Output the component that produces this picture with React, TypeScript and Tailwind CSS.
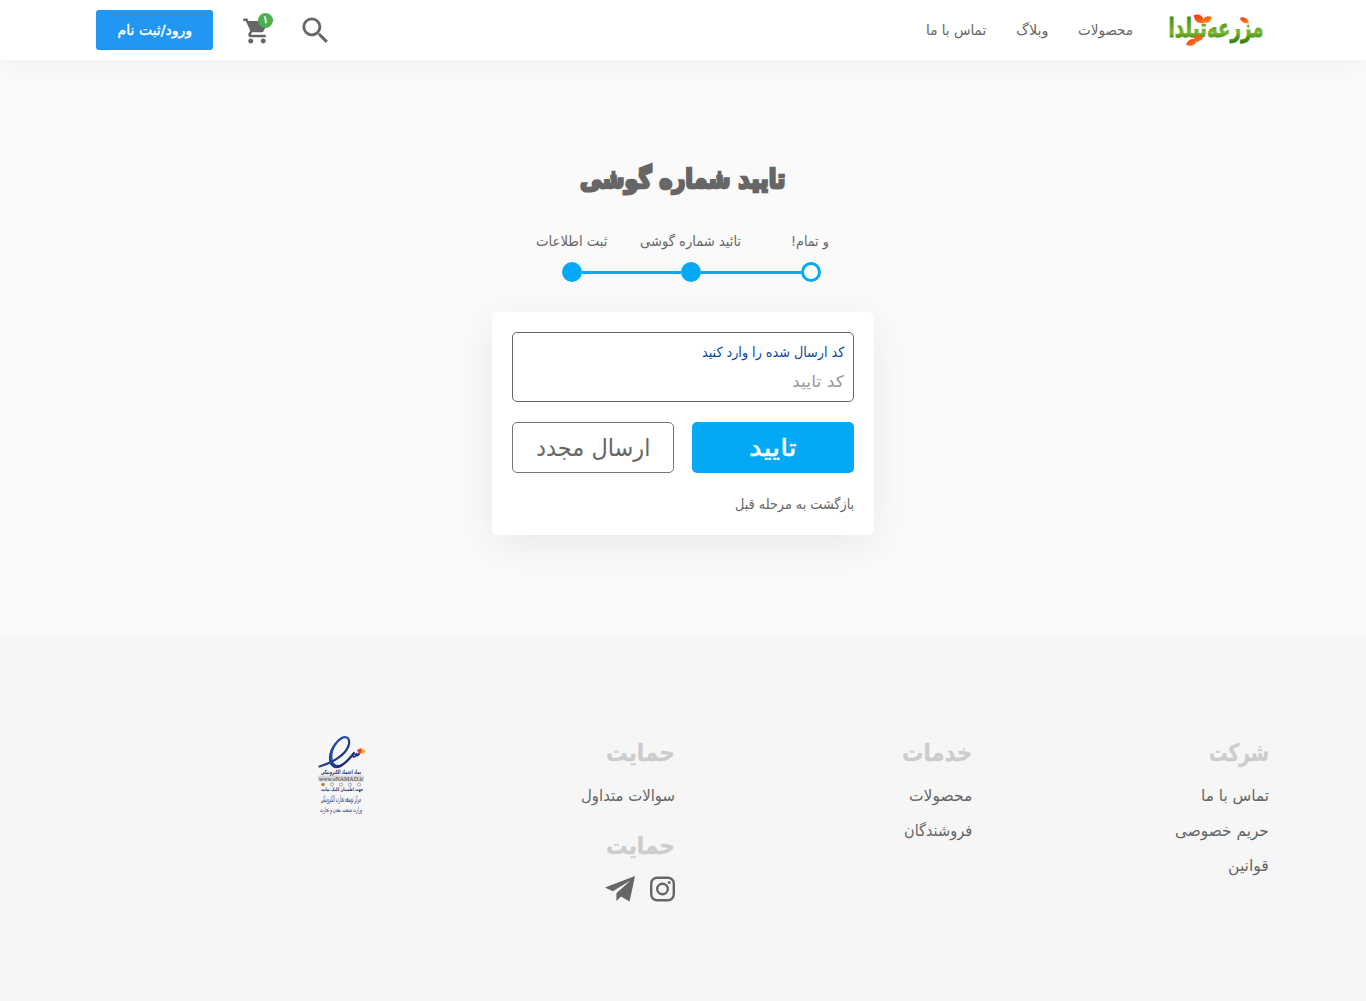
import { useLayoutEffect, useRef, type ReactNode } from "react";
import { MdSearch, MdShoppingCart } from "react-icons/md";

/** Single line of text condensed or widened to a given measure. */
function Fit({ w, className = "", children }: { w: number; className?: string; children: ReactNode }) {
  const inner = useRef<HTMLSpanElement>(null);
  useLayoutEffect(() => {
    const el = inner.current;
    if (el) el.style.transform = `scaleX(${w / el.offsetWidth})`;
  }, [w]);
  return (
    <span className={`flex justify-start whitespace-nowrap ${className}`} style={{ width: w }}>
      <span ref={inner} className="block shrink-0 origin-right">
        {children}
      </span>
    </span>
  );
}

function Logo() {
  return (
    <svg width="98" height="46" viewBox="0 -5 98 46" className="block overflow-visible">
      <defs>
        <linearGradient id="leaf" x1="0" y1="3" x2="0" y2="32" gradientUnits="userSpaceOnUse">
          <stop offset="0" stopColor="#3c8a12" />
          <stop offset="0.35" stopColor="#5da31f" />
          <stop offset="0.6" stopColor="#7ab82f" />
          <stop offset="0.8" stopColor="#478f14" />
          <stop offset="1" stopColor="#2f7d0c" />
        </linearGradient>
        <linearGradient id="petal" x1="0" y1="0" x2="1" y2="1">
          <stop offset="0" stopColor="#ff2a10" />
          <stop offset="1" stopColor="#ff9418" />
        </linearGradient>
      </defs>
      <text
        x="96.5"
        y="24.5"
        direction="rtl"
        textLength="95"
        lengthAdjust="spacingAndGlyphs"
        fontFamily="'DejaVu Sans', sans-serif"
        fontWeight="700"
        fontSize="26"
        fill="url(#leaf)"
        stroke="url(#leaf)"
        strokeWidth="0.8"
      >
        مزرعه‌تیلدا
      </text>
      <path d="M27 3c6-2 10 1 10 8-6 1-10-2-10-8Z M36 10c0-5 4-7 9-5-1 5-5 7-9 5Z" fill="url(#petal)" />
      <path d="M73 6c4-2 8 0 9 5-5 1-8-1-9-5Z" fill="url(#petal)" />
      <path d="M19 33c2-6 7-7 11-5-1 5-6 7-11 5Z M27 26c2-4 6-4 9 0-2 4-7 4-9 0Z" fill="url(#petal)" />
    </svg>
  );
}

function TrustSeal() {
  return (
    <svg width="50" height="84" viewBox="0 0 50 84" className="block overflow-visible" fontFamily="'DejaVu Sans', sans-serif">
      <defs>
        <linearGradient id="seal" x1="0" y1="0" x2="1" y2="1">
          <stop offset="0" stopColor="#2b63b8" />
          <stop offset="1" stopColor="#12206a" />
        </linearGradient>
      </defs>
      <path
        d="M1.5 31.5C10 29 29 21 31 9C32 1 26 0 20 6C12 14 10 26 15 30C21 35 29 27 36 18"
        fill="none"
        stroke="url(#seal)"
        strokeWidth="2.2"
        strokeLinecap="round"
      />
      <path d="M24 3C15 10 12 20 15 27.500C17 31 22 32 26 29C21 34 15 34 12.500 29C9 21 14 8 24 3Z" fill="url(#seal)" stroke="url(#seal)" />
      <path d="M34 20c2 4 4 1 5-2 M37 19c2 3 4 1 5-2" fill="none" stroke="#1b2d7c" strokeWidth="1.8" />
      <path d="m39 15 4-2 2 4-4 2Z" fill="#e4422f" />
      <path d="m43 13 5 3-4 4Z" fill="#f5b32c" />
      <rect x="0" y="40.5" width="46" height="6" fill="#d5d5d5" />
      <g fill="#252a68" textAnchor="middle">
        <text x="23" y="39" fontSize="6" fontWeight="700" textLength="40" lengthAdjust="spacingAndGlyphs">
          نماد اعتماد الکترونیکی
        </text>
        <text x="23" y="46" fontSize="7" fontFamily="'Liberation Serif', serif" textLength="44" lengthAdjust="spacingAndGlyphs" fill="#444">
          www.eNAMAD.ir
        </text>
        <text x="24" y="56" fontSize="5" fontWeight="700" textLength="42" lengthAdjust="spacingAndGlyphs">
          جهت اطمینان کلیک نمایید
        </text>
        <text x="23" y="67" fontSize="9" textLength="40" lengthAdjust="spacingAndGlyphs">
          مرکز توسعه تجارت الکترونیکی
        </text>
        <text x="23" y="77" fontSize="7" textLength="42" lengthAdjust="spacingAndGlyphs">
          وزارت صنعت، معدن و تجارت
        </text>
      </g>
      <circle cx="5" cy="49.5" r="1.8" fill="#e66a2c" />
      <g fill="none" stroke="#777" strokeWidth="0.6">
        <circle cx="14" cy="49.5" r="1.6" />
        <circle cx="23" cy="49.5" r="1.6" />
        <circle cx="32" cy="49.5" r="1.6" />
        <circle cx="41" cy="49.5" r="1.6" />
      </g>
    </svg>
  );
}

function Instagram() {
  return (
    <svg width="25" height="26" viewBox="0 0 25 26" fill="none" stroke="#666" className="block">
      <rect x="1.2" y="1.7" width="22.6" height="22.6" rx="6" strokeWidth="2.4" />
      <circle cx="12.5" cy="13" r="5.3" strokeWidth="2.4" />
      <circle cx="19.2" cy="6.4" r="1.5" fill="#666" stroke="none" />
    </svg>
  );
}

function Telegram() {
  return (
    <svg width="30" height="26" viewBox="0 0 30 26" fill="#666" className="block">
      <path d="M30 0 0 11.6l7.8 3.7L25.5 4.4 11.4 17.2v7.8l4.6-4.6 8.6 5Z" />
    </svg>
  );
}

const steps = [
  { label: "ثبت اطلاعات", w: 72 },
  { label: "تائید شماره گوشی", w: 101 },
  { label: "و تمام!", w: 38 },
];

function FooterLinks({ title, w, links }: { title: string; w: number; links: { t: string; w: number }[] }) {
  return (
    <div>
      <h3>
        <Fit w={w} className="h-[36px] text-[24px] leading-[36px] font-bold text-[#cccccc] [-webkit-text-stroke:0.3px_#cccccc]">{title}</Fit>
      </h3>
      <ul className="mt-[7px]">
        {links.map((l) => (
          <li key={l.t}>
            <a href="#">
              <Fit w={l.w} className="h-[35px] text-[16px] leading-[35px]">{l.t}</Fit>
            </a>
          </li>
        ))}
      </ul>
    </div>
  );
}

export default function App() {
  return (
    <div dir="rtl" className="flex min-h-[1001px] flex-col bg-[#fafafa] font-['DejaVu_Sans',sans-serif] text-[#666666]">
      <header className="flex h-[60px] items-center justify-between bg-white pr-[101px] pl-[96px] shadow-[0_0_30px_rgba(0,0,0,0.05)]">
        <div className="flex items-center">
          <Logo />
          <nav className="mr-[34px] flex gap-[29.5px] text-[14px] leading-[20px]">
            <a href="#"><Fit w={55}>محصولات</Fit></a>
            <a href="#"><Fit w={33}>وبلاگ</Fit></a>
            <a href="#"><Fit w={60}>تماس با ما</Fit></a>
          </nav>
        </div>
        <div className="flex items-center">
          <button aria-label="جستجو" className="ml-[26px] pt-px"><MdSearch size={35} /></button>
          <button aria-label="سبد خرید" className="relative ml-[29px] pt-px">
            <MdShoppingCart size={30} />
            <span className="absolute -top-[2px] left-[16px] flex size-[15px] items-center justify-center rounded-full bg-[#4caf50] text-[10px] leading-none text-white [-webkit-text-stroke:0.4px_white]">۱</span>
          </button>
          <button className="flex h-[40px] w-[117px] items-center justify-center rounded-[3px] bg-[#2196f3] pl-px text-[14px] leading-[20px] text-white [-webkit-text-stroke:0.4px_white]">
            <Fit w={74}>ورود/ثبت نام</Fit>
          </button>
        </div>
      </header>

      <main className="flex h-[575px] flex-col items-center pt-[100px]">
        <h1>
          <Fit w={205} className="h-[39px] text-[26px] leading-[39px] font-bold [-webkit-text-stroke:2.6px_#666666]">تایید شماره گوشی</Fit>
        </h1>

        <div dir="ltr" className="mt-[32px] mr-[-17px] flex w-[357px] flex-col">
          <div className="grid grid-cols-3 text-[14px] leading-[20px]">
            {steps.map((s) => (
              <div key={s.label} dir="rtl" className="flex justify-center pr-px">
                <Fit w={s.w}>{s.label}</Fit>
              </div>
            ))}
          </div>
          <div className="mx-[49px] mt-[11px] flex h-[20px] items-center">
            <span className="size-[20px] shrink-0 rounded-full bg-[#03a9f4]" />
            <span className="h-[3px] w-[99px] bg-[#03a9f4]" />
            <span className="size-[20px] shrink-0 rounded-full bg-[#03a9f4]" />
            <span className="h-[3px] flex-1 bg-[#03a9f4]" />
            <span className="size-[20px] shrink-0 rounded-full border-[3px] border-[#03a9f4] bg-white" />
          </div>
        </div>

        <form className="mt-[30px] h-[223px] w-[382px] rounded-[5px] bg-white p-[20px] shadow-[0_10px_40px_rgba(0,0,0,0.07)]">
          <div className="h-[70px] rounded-[5px] border border-[#666666] px-[9px] pt-[7px]">
            <Fit w={142} className="h-[24px] text-[14px] leading-[24px] text-[#0d47a1]">کد ارسال شده را وارد کنید</Fit>
            <Fit w={52} className="mt-[6px] h-[24px] text-[16px] leading-[24px] text-[#999999]">کد تایید</Fit>
          </div>
          <div className="mt-[20px] flex justify-between text-[24px] leading-[36px]">
            <button type="button" className="flex h-[51px] w-[162px] items-center justify-center rounded-[5px] bg-[#03a9f4] text-white [-webkit-text-stroke:0.5px_white]">
              <Fit w={48}>تایید</Fit>
            </button>
            <button type="button" className="flex h-[51px] w-[162px] items-center justify-center rounded-[5px] border border-[#777777]">
              <Fit w={114}>ارسال مجدد</Fit>
            </button>
          </div>
          <a href="#" className="mt-[21px] block">
            <Fit w={119} className="text-[14px] leading-[20px]">بازگشت به مرحله قبل</Fit>
          </a>
        </form>
      </main>

      <footer className="grid flex-1 grid-cols-[297px_297px_297px_1fr] bg-[#f6f6f6] pt-[100px] pr-[97px]">
        <FooterLinks title="شرکت" w={60} links={[{ t: "تماس با ما", w: 68 }, { t: "حریم خصوصی", w: 94 }, { t: "قوانین", w: 41 }]} />
        <FooterLinks title="خدمات" w={70} links={[{ t: "محصولات", w: 63 }, { t: "فروشندگان", w: 68 }]} />
        <div>
          <FooterLinks title="حمایت" w={69} links={[{ t: "سوالات متداول", w: 94 }]} />
          <h3 className="mt-[15px]">
            <Fit w={69} className="h-[36px] text-[24px] leading-[36px] font-bold text-[#cccccc] [-webkit-text-stroke:0.3px_#cccccc]">حمایت</Fit>
          </h3>
          <div className="mt-[12px] flex gap-[15px]">
            <a href="#" aria-label="اینستاگرام"><Instagram /></a>
            <a href="#" aria-label="تلگرام"><Telegram /></a>
          </div>
        </div>
        <div className="pr-[10px]"><TrustSeal /></div>
      </footer>
    </div>
  );
}
